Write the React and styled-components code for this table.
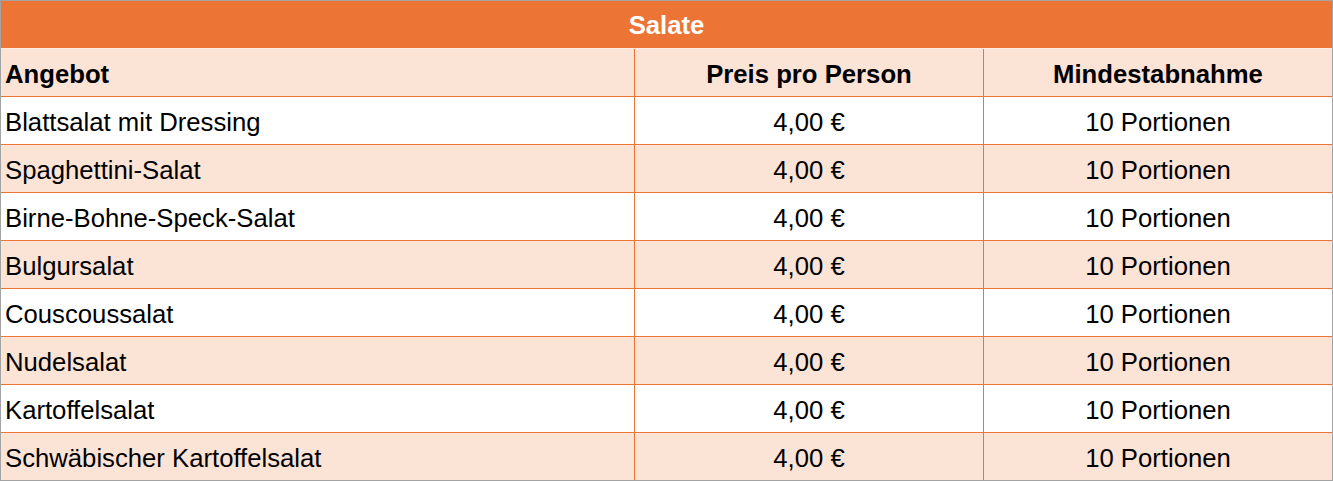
import React from 'react';
import styled, { createGlobalStyle } from 'styled-components';

const GlobalStyle = createGlobalStyle`
  html, body {
    margin: 0;
    padding: 0;
    background: #ffffff;
  }
  body {
    font-family: "Liberation Sans", Arial, sans-serif;
  }
`;

const ORANGE = '#ec7435';
const PEACH = '#fbe3d6';

const Frame = styled.div`
  width: 1333px;
  box-sizing: border-box;
  border: 1px solid #a3a3a3;
`;

const Title = styled.div`
  height: 48px;
  box-sizing: border-box;
  padding-top: 2px;
  background: ${ORANGE};
  border-bottom: 1px solid #fdebe1;
  color: #ffffff;
  font-weight: 700;
  font-size: 25.7px;
  display: flex;
  align-items: center;
  justify-content: center;
`;

const Grid = styled.div`
  display: grid;
  grid-template-columns: 633px 348px 348px;
  grid-auto-rows: 47px;
  gap: 1px;
  background: ${ORANGE};
`;

const Cell = styled.div`
  display: flex;
  align-items: center;
  box-sizing: border-box;
  padding-top: 3px;
  justify-content: ${(p) => (p.$align === 'left' ? 'flex-start' : 'center')};
  padding-left: ${(p) => (p.$align === 'left' ? '4px' : '0')};
  background: ${(p) => (p.$shaded ? PEACH : '#ffffff')};
  font-size: 25.7px;
  font-weight: ${(p) => (p.$bold ? 700 : 400)};
  color: #000000;
  white-space: nowrap;
`;

const rows = [
  'Blattsalat mit Dressing',
  'Spaghettini-Salat',
  'Birne-Bohne-Speck-Salat',
  'Bulgursalat',
  'Couscoussalat',
  'Nudelsalat',
  'Kartoffelsalat',
  'Schwäbischer Kartoffelsalat',
];

export default function App() {
  return (
    <>
      <GlobalStyle />
      <Frame>
        <Title>Salate</Title>
        <Grid>
          <Cell $align="left" $shaded $bold>Angebot</Cell>
          <Cell $shaded $bold>Preis pro Person</Cell>
          <Cell $shaded $bold>Mindestabnahme</Cell>
          {rows.map((name, i) => (
            <React.Fragment key={name}>
              <Cell $align="left" $shaded={i % 2 === 1}>{name}</Cell>
              <Cell $shaded={i % 2 === 1}>4,00 €</Cell>
              <Cell $shaded={i % 2 === 1}>10 Portionen</Cell>
            </React.Fragment>
          ))}
        </Grid>
      </Frame>
    </>
  );
}
